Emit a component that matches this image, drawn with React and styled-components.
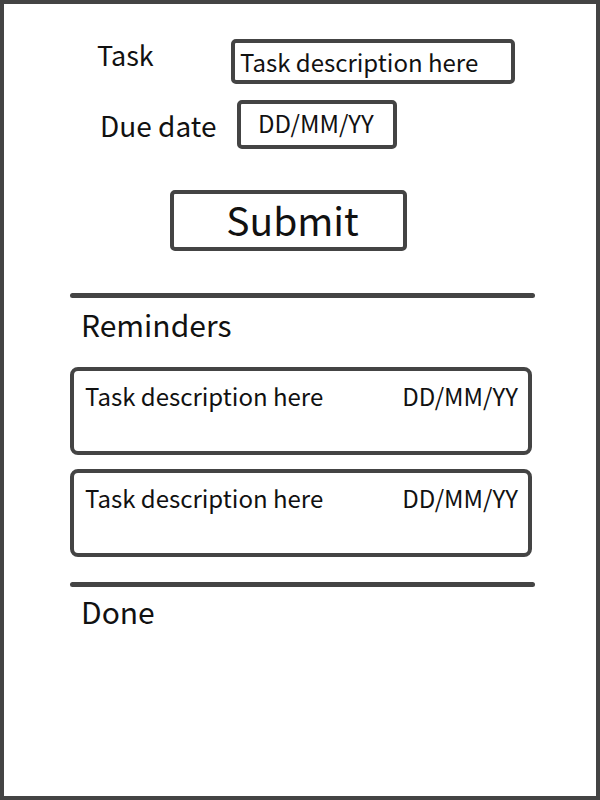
import React from 'react';
import styled, { createGlobalStyle } from 'styled-components';

const GlobalStyle = createGlobalStyle`
  html, body {
    margin: 0;
    padding: 0;
    background: #ffffff;
  }
  body {
    font-family: "Noto Sans CJK JP", "Noto Sans", sans-serif;
    color: #111111;
  }
`;

const Frame = styled.div`
  box-sizing: border-box;
  width: 600px;
  height: 800px;
  border: 4px solid #444444;
  background: #ffffff;
  padding-top: 35px;
`;

const FormRow = styled.div`
  display: flex;
  align-items: flex-start;
  padding-left: ${(p) => p.$indent}px;
  margin-bottom: ${(p) => p.$gap || 0}px;
`;

const Label = styled.div`
  width: ${(p) => p.$width}px;
  font-size: ${(p) => p.$size}px;
  line-height: 32px;
  padding-top: ${(p) => p.$top}px;
`;

const Field = styled.div`
  box-sizing: border-box;
  width: ${(p) => p.$width}px;
  height: ${(p) => p.$height}px;
  border: 4px solid #444444;
  border-radius: 5px;
  font-size: 24px;
  line-height: 30px;
  padding: ${(p) => p.$pad};
`;

const SubmitWrap = styled.div`
  display: flex;
  padding-left: 166px;
  margin-top: 41px;
`;

const SubmitButton = styled.button`
  box-sizing: border-box;
  width: 237px;
  height: 61px;
  border: 4px solid #444444;
  border-radius: 5px;
  background: #ffffff;
  font-family: "Noto Sans CJK JP", "Noto Sans", sans-serif;
  font-size: 39px;
  color: #111111;
  padding: 0 0 2px 8px;
  line-height: 1;
`;

const Section = styled.section`
  padding-left: 66px;
  width: 465px;
`;

const Divider = styled.div`
  height: 5px;
  width: 465px;
  border-radius: 3px;
  background: #444444;
  margin-top: ${(p) => p.$top}px;
`;

const Heading = styled.h2`
  margin: ${(p) => p.$top}px 0 0 11px;
  font-weight: normal;
  font-size: 30px;
  line-height: 38px;
`;

const CardList = styled.div`
  display: flex;
  flex-direction: column;
  gap: 14px;
  margin-top: 24px;
`;

const Card = styled.div`
  box-sizing: border-box;
  width: 462px;
  height: 88px;
  border: 4px solid #444444;
  border-radius: 8px;
  display: flex;
  justify-content: space-between;
  align-items: flex-start;
  padding: 10px 10px 0 11px;
  font-size: 24px;
  line-height: 30px;
`;

const reminders = [
  { task: 'Task description here', date: 'DD/MM/YY' },
  { task: 'Task description here', date: 'DD/MM/YY' },
];

export default function App() {
  return (
    <>
      <GlobalStyle />
      <Frame>
        <FormRow $indent={93} $gap={16}>
          <Label $width={134} $size={27} $top={0}>Task</Label>
          <Field $width={284} $height={45} $pad="4px 0 0 5px">Task description here</Field>
        </FormRow>
        <FormRow $indent={96}>
          <Label $width={137} $size={28} $top={9}>Due date</Label>
          <Field $width={160} $height={49} $pad="4px 0 0 17px">DD/MM/YY</Field>
        </FormRow>
        <SubmitWrap>
          <SubmitButton>Submit</SubmitButton>
        </SubmitWrap>
        <Section>
          <Divider $top={42} />
          <Heading $top={7}>Reminders</Heading>
          <CardList>
            {reminders.map((r, i) => (
              <Card key={i}>
                <span>{r.task}</span>
                <span>{r.date}</span>
              </Card>
            ))}
          </CardList>
          <Divider $top={25} />
          <Heading $top={5}>Done</Heading>
        </Section>
      </Frame>
    </>
  );
}
